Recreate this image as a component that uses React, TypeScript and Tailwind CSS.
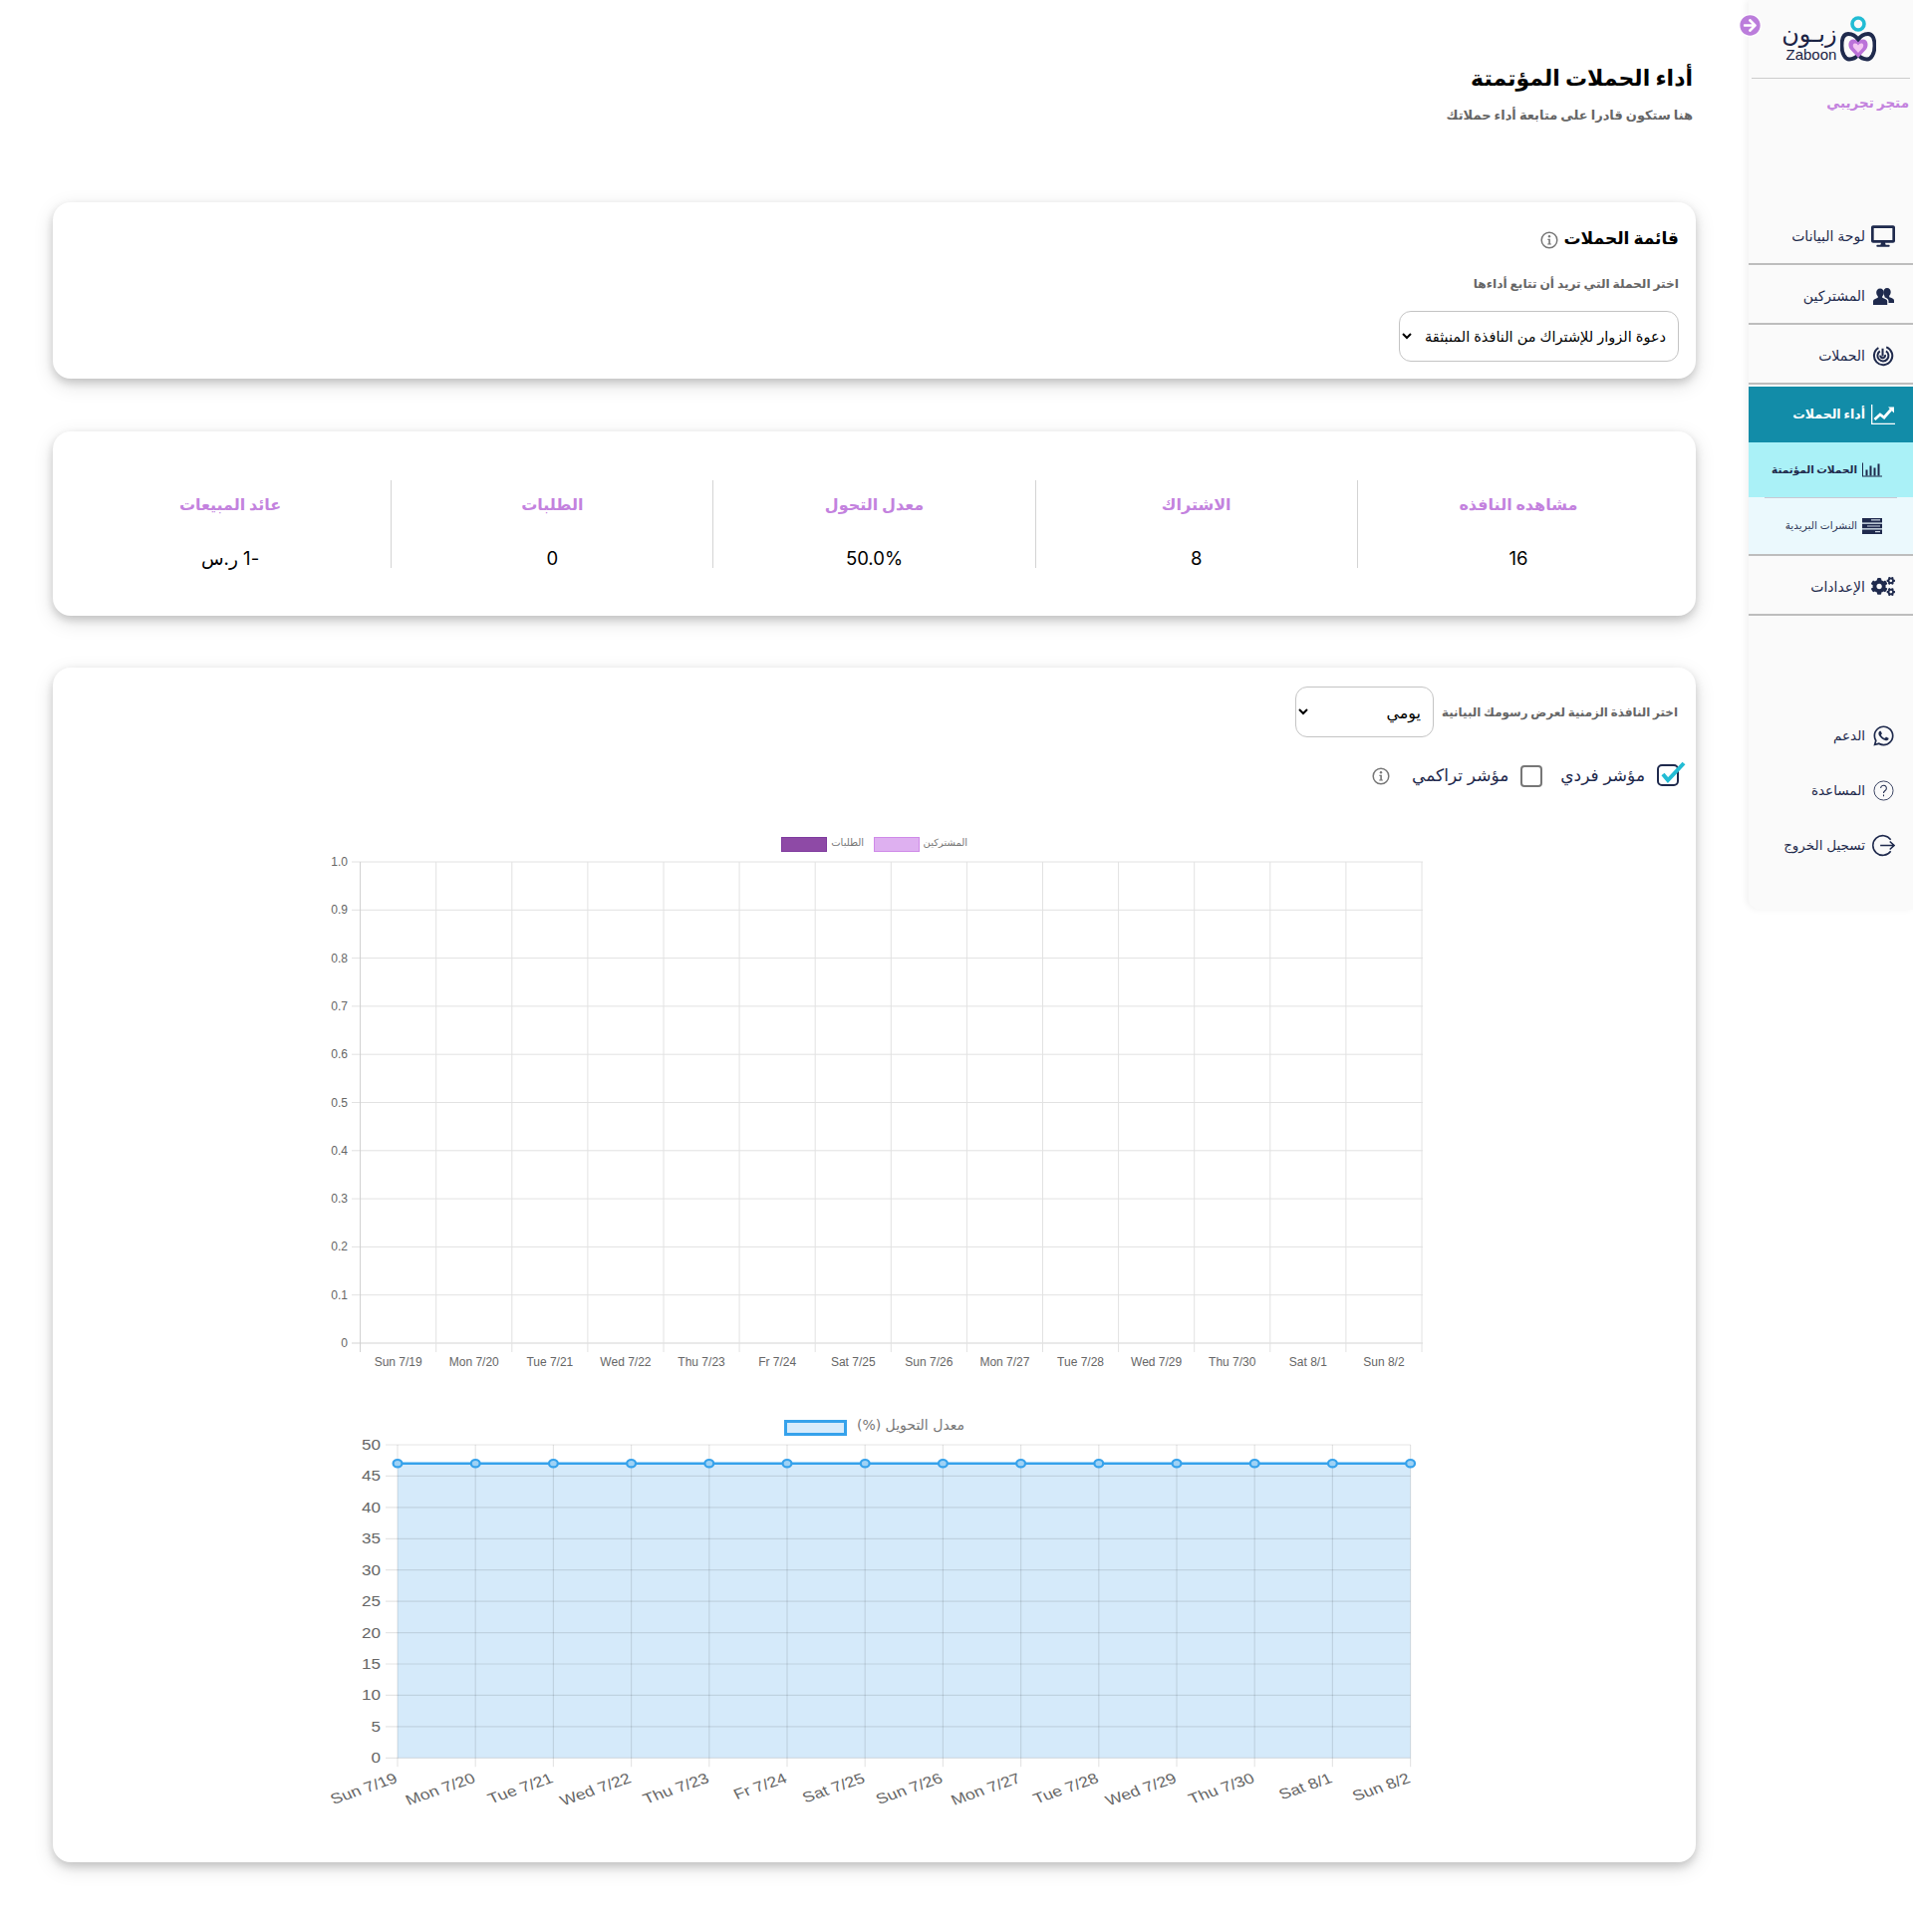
import { FaArrowCircleRight, FaCogs, FaDesktop, FaWhatsapp } from "react-icons/fa";

const arabic = "font-['Inter','DejaVu_Sans',sans-serif]";

const InfoIcon = ({ className }: { className?: string }) => (
  <svg viewBox="0 0 18 18" className={className}>
    <circle cx="9" cy="9" r="7.8" fill="none" stroke="#777" strokeWidth="1.5" />
    <circle cx="9" cy="5.2" r="1.2" fill="#777" />
    <path d="M7.4 7.8h2.5v4.6h1v1.2H7.2v-1.2h1.1V9H7.4z" fill="#777" />
  </svg>
);

const PeopleIcon = () => (
  <svg viewBox="0 0 21 18" className="h-[18px] w-[21px]" fill="#1f2a4d">
    <path d="M14 1c2.300 0 3.700 1.700 3.700 4 0 1.500-.6 3-1.500 3.800v1.400c2.200.7 4.800 1.500 4.800 3.300V16h-5.500v-2c0-1.800-1.900-3-4-3.800.1-1-.1-1.500-.5-2-.3-.8-.6-1.900-.6-3 0-2.500 1.300-4.200 3.600-4.200z" />
    <path d="M7 1.500c2.300 0 3.800 1.700 3.800 4 0 1.500-.6 3-1.600 3.900v1.300c2.400.8 5 1.700 5 3.600V18H0v-3.700c0-1.900 2.500-2.800 4.800-3.600V9.400C3.800 8.500 3.200 7 3.200 5.500c0-2.300 1.500-4 3.800-4z" />
  </svg>
);

const RadarIcon = () => (
  <svg viewBox="0 0 24 24" className="h-[22px] w-[22px]" fill="none" stroke="#1f2a4d" strokeWidth="2.2">
    <path d="M15.500 2.600A10 10 0 1 1 7 3.400" />
    <path d="M15.200 6.900A6 6 0 1 1 8.500 7" />
    <path d="M11.500 4v8.500M14 11a2.600 2.600 0 1 1-5 .5" />
  </svg>
);

const TrendIcon = () => (
  <svg viewBox="0 0 24 20" className="h-5 w-6" fill="none" stroke="#fff">
    <path d="M.7 0v19.300H24" strokeWidth="1.300" />
    <path d="M3.500 15l5.500-5 4 3 7-8" strokeWidth="2.800" />
    <path d="M17 2.500h6v6z" fill="#fff" strokeWidth="0" />
  </svg>
);

const BarsIcon = () => (
  <svg viewBox="0 0 20 14" className="h-[15px] w-5" fill="#1f2a4d">
    <path d="M0 0h1v13h19v1H0z" />
    <path d="M3.500 7h2v6h-2zM7.500 3h2v10h-2zM11.500 5h2v8h-2zM15.500 1h2v12h-2z" />
  </svg>
);

const ListIcon = () => (
  <svg viewBox="0 0 20 16" className="h-4 w-5">
    <path d="M0 0h20v4.600H0zM0 5.700h20v4.600H0zM0 11.400h20V16H0z" fill="#1f2a4d" />
    <path d="M9 1.800h9M5 8h13M13 13.700h5" stroke="#c9d3e0" strokeWidth="1.200" />
  </svg>
);

const HelpIcon = () => (
  <svg viewBox="0 0 22 22" className="h-[21px] w-[21px]" fill="none" stroke="#1f2a4d">
    <circle cx="11" cy="11" r="10" strokeWidth="0.900" />
    <path d="M8 8.500a3 3 0 1 1 4.600 2.500c-1 .7-1.600 1.200-1.600 2.600M11 15.300v1.600" strokeWidth="1.100" />
  </svg>
);

const LogoutIcon = () => (
  <svg viewBox="0 0 24 24" className="h-[23px] w-[23px]" fill="none" stroke="#1f2a4d" strokeWidth="1.600">
    <path d="M19.500 6A10.300 10.300 0 1 0 19.500 18" />
    <path d="M8.500 12h14.500M18.500 7.800l4.500 4.200-4.500 4.200" />
  </svg>
);

const Logo = () => (
  <div dir="ltr" className="flex items-end gap-[3px]">
    <div className={`flex w-[51px] flex-col items-start text-[#1a2344] ${arabic}`}>
      <span dir="rtl" className="w-full text-left text-[24px] leading-[26px]">زبـون</span>
      <span className="font-['Liberation_Sans',sans-serif] text-[15px] leading-[15px]">Zaboon</span>
    </div>
    <svg viewBox="0 0 36 46" className="h-[46px] w-9">
      <circle cx="18" cy="8" r="6" fill="none" stroke="#22bcd4" strokeWidth="3.600" />
      <path d="M18 24c-3-5-7-6-10-6-4 0-6.500 4-6.500 12S5 43.500 9 43.500c3.500 0 6.500-1.500 9-4.500 2.500 3 5.500 4.500 9 4.500 4 0 7.500-5.500 7.500-13.500s-2.500-12-6.500-12c-3 0-7 1-10 6z" fill="none" stroke="#1f2a4d" strokeWidth="3.800" />
      <path d="M18 42l-8-8.500c-3-4-1.500-10 3-10 2.200 0 3.800 1 5 3 1.200-2 2.800-3 5-3 4.500 0 6 6 3 10z" fill="#bb72d9" />
      <path d="M18 37l-4.500-5c-1.500-2.500-.5-4.500 1.500-4.500 1.400 0 2.200.8 3 2 .8-1.200 1.600-2 3-2 2 0 3 2 1.500 4.500z" fill="#f3c6f2" />
    </svg>
  </div>
);

const MenuItem = ({ icon, label }: { icon: React.ReactNode; label: string }) => (
  <div className="flex h-[60px] items-center gap-[6px] border-b-2 border-[#bdbdbd] pt-[3px] pr-[18px] text-[14px] text-[#1f2a4d]">
    <span className="flex w-6 justify-center">{icon}</span>
    <span>{label}</span>
  </div>
);

const FooterItem = ({ icon, label }: { icon: React.ReactNode; label: string }) => (
  <div className="flex h-[55px] items-center gap-[6px] pr-[18px] text-[13.5px] text-[#1f2a4d]">
    <span className="flex w-6 justify-center">{icon}</span>
    <span>{label}</span>
  </div>
);

const Sidebar = () => (
  <aside className={`relative h-[913px] w-[165px] shrink-0 rounded-bl-xl bg-[#fafafa] shadow-[-3px_0_6px_rgba(0,0,0,0.05)] ${arabic}`}>
    <span className="absolute top-[14px] left-[-10px] flex h-[23px] w-[23px] items-center justify-center rounded-full bg-white">
      <FaArrowCircleRight className="h-[21px] w-[21px] text-[#bb7ddb]" />
    </span>
    <div className="mx-[3px] flex h-[79px] items-end justify-center border-b border-[#ccc] pb-[16px]">
      <Logo />
    </div>
    <div className="h-[127px] pt-[10px] pr-[4px] text-[13.5px] leading-[28px] font-bold text-[#c382de]">متجر تجريبي</div>
    <MenuItem icon={<FaDesktop className="h-[22px] w-6" />} label="لوحة البيانات" />
    <MenuItem icon={<PeopleIcon />} label="المشتركين" />
    <MenuItem icon={<RadarIcon />} label="الحملات" />
    <div className="mt-[2px] flex h-[56px] items-center gap-[6px] bg-[#128ca8] pr-[18px] text-[12.5px] font-bold text-white">
      <span className="flex w-6 justify-center"><TrendIcon /></span>
      <span>أداء الحملات</span>
    </div>
    <div className="flex h-[55px] items-center gap-[5px] bg-[#aaf1f7] pr-[31px] text-[10.5px] font-bold text-[#1f2a4d]">
      <BarsIcon />
      <span>الحملات المؤتمتة</span>
    </div>
    <div className="bg-[#ebf9fd]">
      <div className="mx-[16px] border-t border-[#c9c9d4]" />
      <div className="flex h-[58px] items-center gap-[5px] border-b-2 border-[#bdbdbd] pr-[31px] text-[10.5px] text-[#2e3858]">
        <ListIcon />
        <span>النشرات البريدية</span>
      </div>
    </div>
    <MenuItem icon={<FaCogs className="h-[23px] w-6" />} label="الإعدادات" />
    <div className="pt-[93px]">
      <FooterItem icon={<FaWhatsapp className="h-[23px] w-[23px]" />} label="الدعم" />
      <FooterItem icon={<HelpIcon />} label="المساعدة" />
      <FooterItem icon={<LogoutIcon />} label="تسجيل الخروج" />
    </div>
  </aside>
);

const stats = [
  { label: "مشاهده النافذه", value: "16" },
  { label: "الاشتراك", value: "8" },
  { label: "معدل التحول", value: "50.0%" },
  { label: "الطلبات", value: "0" },
  { label: "عائد المبيعات", value: "-1 ر.س" },
];

const cardClass =
  "rounded-[18px] bg-white shadow-[0_4px_8px_0_rgba(0,0,0,0.16),0_6px_20px_0_rgba(0,0,0,0.13)]";

const days = [
  "Sun 7/19", "Mon 7/20", "Tue 7/21", "Wed 7/22", "Thu 7/23", "Fr 7/24", "Sat 7/25",
  "Sun 7/26", "Mon 7/27", "Tue 7/28", "Wed 7/29", "Thu 7/30", "Sat 8/1", "Sun 8/2",
];

const grid = "#e2e2e2";

// viewBox uses page coordinates so numbers read straight off the screenshot
const OrdersChart = () => {
  const left = 361.6;
  const step = 76.1;
  const top = 865;
  const rowH = 48.3;
  const labels = ["1.0", "0.9", "0.8", "0.7", "0.6", "0.5", "0.4", "0.3", "0.2", "0.1", "0"];
  return (
    <svg viewBox="53 830 1649 570" className="block h-[570px] w-[1649px]">
      <rect x="784.500" y="840.500" width="45" height="14" fill="#8e4aa6" stroke="#7e3a9e" />
      <text x="867" y="849" textAnchor="end" fontSize="10" fill="#777" fontFamily="DejaVu Sans, sans-serif">الطلبات</text>
      <rect x="877.500" y="840.500" width="45" height="14" fill="#deb0f0" stroke="#cf8ae8" />
      <text x="971" y="849" textAnchor="end" fontSize="10" fill="#777" fontFamily="DejaVu Sans, sans-serif">المشتركين</text>
      {labels.map((t, i) => {
        const y = top + i * rowH;
        return (
          <g key={t}>
            <line x1="353" x2="1428" y1={y} y2={y} stroke={grid} strokeWidth={i === 10 ? 1.5 : 1} />
            <text x="349" y={y + 4} textAnchor="end" fontSize="12" fill="#666" fontFamily="Liberation Sans, sans-serif">{t}</text>
          </g>
        );
      })}
      {Array.from({ length: 15 }, (_, i) => (
        <line key={i} x1={left + i * step} x2={left + i * step} y1={top} y2="1357" stroke={i === 0 ? "#cfcfcf" : grid} />
      ))}
      {days.map((d, i) => (
        <text key={d} x={left + (i + 0.5) * step} y="1371" textAnchor="middle" fontSize="12" fill="#666" fontFamily="Liberation Sans, sans-serif">{d}</text>
      ))}
    </svg>
  );
};

const RateChart = () => {
  const left = 399;
  const step = 78.2;
  const right = left + 13 * step;
  const top = 1450;
  const rowH = 31.43;
  const bottom = top + 10 * rowH;
  const lineY = 1468.7;
  return (
    <svg viewBox="53 1400 1649 469" className="block h-[469px] w-[1649px]">
      <rect x="788.500" y="1426.500" width="60" height="13" fill="#d7ebfb" stroke="#36a2eb" strokeWidth="3" />
      <text x="968" y="1435" textAnchor="start" direction="rtl" fontSize="14" fill="#777" fontFamily="DejaVu Sans, sans-serif">معدل التحويل (%)</text>
      <rect x={left} y={lineY} width={right - left} height={bottom - lineY} fill="#d5eafa" />
      {Array.from({ length: 11 }, (_, i) => {
        const y = top + i * rowH;
        return (
          <g key={i}>
            <line x1="387" x2={right} y1={y} y2={y} stroke="rgba(0,0,0,0.1)" strokeWidth="1.2" />
            <text transform={`translate(382 ${y + 5}) scale(1.22 1)`} textAnchor="end" fontSize="14" fill="#666" fontFamily="Liberation Sans, sans-serif">{50 - i * 5}</text>
          </g>
        );
      })}
      {days.map((d, i) => {
        const x = left + i * step;
        return (
          <g key={d}>
            <line x1={x} x2={x} y1={top} y2={bottom + 9} stroke="rgba(0,0,0,0.1)" strokeWidth="1.2" />
            <text transform={`translate(${x + 1} ${bottom + 24}) scale(1.22 1) rotate(-23)`} textAnchor="end" fontSize="14.500" fill="#666" fontFamily="Liberation Sans, sans-serif">{d}</text>
          </g>
        );
      })}
      <line x1={left} x2={right} y1={lineY} y2={lineY} stroke="#36a2eb" strokeWidth="2.4" />
      {days.map((d, i) => (
        <ellipse key={d} cx={left + i * step} cy={lineY} rx="4.400" ry="3.700" fill="#9fd2f5" stroke="#36a2eb" strokeWidth="2.200" />
      ))}
    </svg>
  );
};

const Main = () => (
  <main className="mr-[53px] w-[1649px] shrink-0">
    <header className="h-[203px] pt-[60px] pr-[3px]">
      <h1 className="text-[22px] leading-[36px] font-bold text-black">أداء الحملات المؤتمتة</h1>
      <p className="mt-[8px] text-[13px] leading-[22px] font-bold text-[#666]">هنا ستكون قادرا على متابعة أداء حملاتك</p>
    </header>

    <section className={`${cardClass} h-[177px] px-[17px] pt-[22px]`}>
      <div className="flex items-center gap-[6px]">
        <h2 className="text-[17px] leading-[28px] font-bold text-black">قائمة الحملات</h2>
        <InfoIcon className="mt-[3px] h-[18px] w-[18px]" />
      </div>
      <p className="mt-[22px] text-[12.2px] leading-[20px] font-bold text-[#666]">اختر الحملة التي تريد أن تتابع أداءها</p>
      <select
        defaultValue="popup"
        className="mt-[17px] block h-[51px] w-[281px] rounded-[12px] border border-[#c4c4c4] bg-white px-[8px] text-[14.5px] text-black"
      >
        <option value="popup">دعوة الزوار للإشتراك من النافذة المنبثقة</option>
      </select>
    </section>

    <section className={`${cardClass} mt-[53px] flex h-[185px] items-center px-[17px]`}>
      {stats.map((s, i) => (
        <div
          key={s.label}
          className={`flex h-[88px] flex-1 flex-col items-center border-[#d4d4d4] pt-[10px] ${i < 4 ? "border-l" : ""}`}
        >
          <span className="text-[16px] leading-[28px] font-bold text-[#c382de]">{s.label}</span>
          <span className="mt-[26px] text-[18.5px] leading-[28px] text-black">{s.value}</span>
        </div>
      ))}
    </section>

    <section className={`${cardClass} mt-[52px] h-[1199px] pt-[19px]`}>
      <div className="flex h-[51px] items-center gap-[8px] pr-[18px]">
        <label className="text-[11.9px] font-bold text-[#666]">اختر النافذة الزمنية لعرض رسومك البيانية</label>
        <select
          defaultValue="daily"
          className="block h-[51px] w-[139px] rounded-[12px] border border-[#c4c4c4] bg-white px-[8px] text-[16px] text-black"
        >
          <option value="daily">يومي</option>
        </select>
      </div>
      <div className="mt-[28px] flex h-[22px] items-center pr-[10px] text-[17px] text-[#1f2a4d]">
        <svg viewBox="0 0 29 26" className="-mt-[4px] h-[26px] w-[29px]">
          <rect x="1" y="4" width="20" height="20" rx="4" fill="none" stroke="#1f2a4d" strokeWidth="2" />
          <path d="M6 13l5 6L27 2" fill="none" stroke="#22bcd4" strokeWidth="4" />
        </svg>
        <span className="mr-[12px]">مؤشر فردي</span>
        <span className="mr-[18px] h-[22px] w-[22px] rounded-[4px] border-2 border-[#777]" />
        <span className="mr-[12px]">مؤشر تراكمي</span>
        <InfoIcon className="mr-[22px] h-[18px] w-[18px]" />
      </div>
      <div dir="ltr" className="mt-[40px]">
        <OrdersChart />
        <RateChart />
      </div>
    </section>
  </main>
);

export default function App() {
  return (
    <div dir="rtl" className={`flex min-h-[1939px] items-start overflow-hidden bg-white ${arabic}`}>
      <Sidebar />
      <Main />
    </div>
  );
}
